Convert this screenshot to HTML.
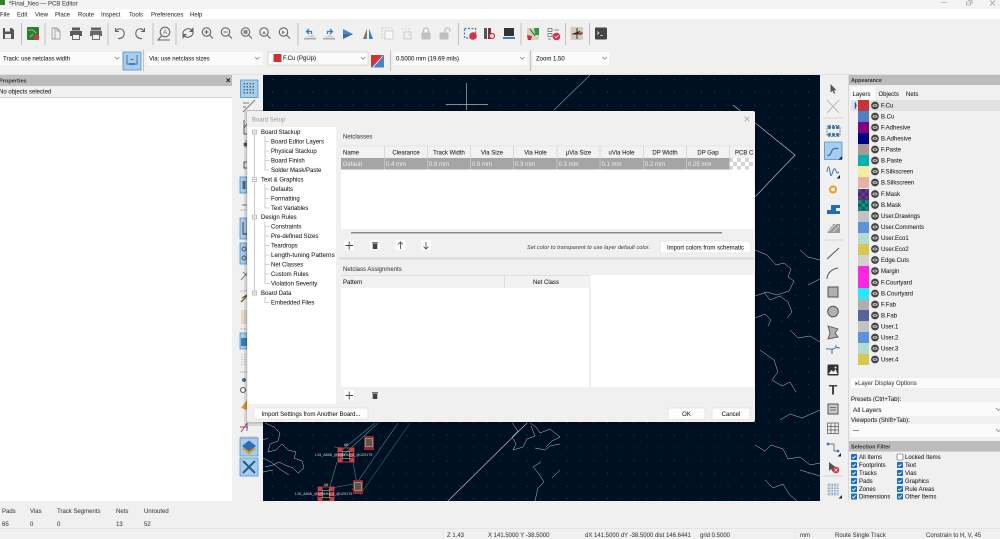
<!DOCTYPE html>
<html lang="en"><head><meta charset="utf-8"><title>Final_Neo — PCB Editor</title>
<style>
html,body{margin:0;padding:0;width:1000px;height:539px;overflow:hidden;background:#f0f0f0}
svg{display:block;filter:blur(.35px)}
text{font-family:"Liberation Sans",sans-serif;font-size:6px;fill:#1f1f1f;stroke:#1f1f1f;stroke-width:.07}
.m{fill:#444;stroke:#444}.h{fill:#3a3a3a;stroke:#3a3a3a}.g{fill:#999;stroke:none}.c{text-anchor:middle}.w{fill:#eee;stroke:none}
.i{fill:none;stroke:#666;stroke-width:1.1}.f{fill:#555}
.b{fill:#a8cdec;stroke:#4d94d0;stroke-width:.8}
.sep{stroke:#b5b5b5;stroke-width:.8}
.tl{stroke:#aaa;stroke-width:.6;fill:none}
.coast{fill:none;stroke:#c3c8cc;stroke-width:.5}
.cb{fill:#1c6fc4}.ck{fill:none;stroke:#fff;stroke-width:.8}
.eye{fill:#444}.eyei{fill:#ccc}
</style></head><body>
<svg width="1000" height="539" viewBox="0 0 1000 539" xmlns="http://www.w3.org/2000/svg">
<defs>
<pattern id="gd" width="13.4" height="12.7" patternUnits="userSpaceOnUse" x="4" y="3"><rect width=".9" height=".9" fill="#3c4855"/></pattern>
<pattern id="chk" width="8" height="8" patternUnits="userSpaceOnUse" x="729" y="158"><rect width="8" height="8" fill="#fff"/><rect width="4" height="4" fill="#d5d5d5"/><rect x="4" y="4" width="4" height="4" fill="#d5d5d5"/></pattern>
<pattern id="pm" width="7" height="7" patternUnits="userSpaceOnUse" x="858" y="189"><rect width="7" height="7" fill="#4a2a70"/><rect width="3.5" height="3.5" fill="#6a3a86"/><rect x="3.5" y="3.5" width="3.5" height="3.5" fill="#6a3a86"/></pattern>
<pattern id="bm" width="7" height="7" patternUnits="userSpaceOnUse" x="858" y="200"><rect width="7" height="7" fill="#00695c"/><rect width="3.5" height="3.5" fill="#1f8a7a"/><rect x="3.5" y="3.5" width="3.5" height="3.5" fill="#1f8a7a"/></pattern>
<g id="tr"><rect x="-2.300" y="-1.800" width="4.600" height="5.300" fill="#444"/><rect x="-3" y="-3.200" width="6" height="1" fill="#444"/></g>
<g id="ey"><circle r="3.9" class="eye"/><ellipse rx="2.5" ry="1.5" class="eyei"/><circle r=".9" fill="#444"/></g>
<g id="on"><rect x="-3" y="-3" width="6" height="6" rx=".8" class="cb"/><path d="M-1.800 0l1.200 1.300 2.300-2.500" class="ck"/></g>
<g id="fp"><rect x="-8" y="-7" width="16" height="14" fill="none" stroke="#b8323c" stroke-width="1"/><rect x="-8" y="-7" width="4.500" height="4" fill="#c8404a"/><rect x="3.500" y="-7" width="4.500" height="4" fill="#c8404a"/><rect x="-8" y="3" width="4.500" height="4" fill="#c8404a"/><rect x="3.500" y="3" width="4.500" height="4" fill="#c8404a"/><rect x="-8" y="-2" width="4.500" height="4" fill="#c8404a"/><rect x="3.500" y="-2" width="4.500" height="4" fill="#c8404a"/><rect x="-3.500" y="-3.500" width="7" height="7" fill="none" stroke="#d8d8a0" stroke-width=".5"/></g>
<g id="fs"><rect x="-5" y="-7" width="10" height="14" fill="#8c2a38"/><rect x="-3.500" y="-4.500" width="7" height="8" fill="#555" stroke="#cdd89a" stroke-width=".5"/></g>
</defs>

<!-- window chrome -->
<rect width="1000" height="539" fill="#f0f0f0"/>
<rect width="1000" height="9" fill="#f3f3f3"/>
<rect y="9" width="1000" height="10" fill="#fff"/>
<rect x="0" y="0" width="5" height="5" fill="#3d7a33"/>
<text x="9" y="5.500" class="m">*Final_Neo — PCB Editor</text>
<path d="M941 2.500h6M968 .5h4v3.500M966.500 2h4v3h-4zM990 .5l5 5M995 .5l-5 5" fill="none" stroke="#888" stroke-width=".6"/>
<text x="0" y="16.500" class="h">File</text><text x="17" y="16.500" class="h">Edit</text><text x="35" y="16.500" class="h">View</text><text x="55" y="16.500" class="h">Place</text><text x="78" y="16.500" class="h">Route</text><text x="101" y="16.500" class="h">Inspect</text><text x="129" y="16.500" class="h">Tools</text><text x="151" y="16.500" class="h">Preferences</text><text x="190" y="16.500" class="h">Help</text>

<!-- toolbar row 1 separators -->
<path class="sep" d="M21.500 23v22M45 23v22M108 23v22M153 23v22M176 23v22M298 23v22M458.500 23v22M521 23v22M565.500 23v22M589.500 23v22"/>
<!-- save -->
<path d="M3 28h9l2 2v9H3z" fill="#555"/><rect x="5" y="28" width="5" height="3.500" fill="#eee"/><rect x="5" y="34" width="6" height="4.500" fill="#eee"/>
<!-- board setup -->
<rect x="27" y="27" width="12" height="13" rx="1" fill="#2f7d32"/><path d="M28 30h5l3 3M30 37l3-3" stroke="#a6d88c" stroke-width=".8" fill="none"/><circle cx="36.500" cy="37" r="2.800" fill="#d43a3a"/>
<!-- page/print/plot -->
<path d="M52 28h5l3 3v8h-8zM55 28v11M57 28v3h3" fill="none" stroke="#888" stroke-width=".7"/>
<path d="M72 27.500h8v3h-8zM70 31h12v5h-12z" fill="#5a5a5a"/><rect x="72.500" y="34.500" width="7" height="5" fill="#f0f0f0" stroke="#5a5a5a" stroke-width=".9"/>
<path d="M91 27.500h10v3H91zM90 31h12v5H90z" fill="#666"/><rect x="92.500" y="34.500" width="7" height="5" fill="#f0f0f0" stroke="#666" stroke-width=".9"/>
<!-- undo redo -->
<path class="i" d="M115.500 28v3.500h3.500M116 31c2-3 7-3 8 1s-2 7-6 6.500"/>
<path class="i" d="M144.500 28v3.500H141M144 31c-2-3-7-3-8 1s2 7 6 6.500"/>
<!-- find -->
<circle cx="165" cy="32" r="4.800" class="i"/><path class="i" d="M161.500 36l-3.500 4h12"/><text x="165" y="34" class="c" style="font-size:6px;fill:#666;stroke:none">A</text>
<!-- refresh + zooms -->
<path class="i" d="M183 35c-1-5 5-8 9-5M193 31c1 5-5 8-9 5" stroke-width="1.200"/><path d="M193.500 27v5h-4.500zM182.500 39v-5h4.500z" fill="#666"/>
<g class="i"><circle cx="206.500" cy="32" r="4.200"/><path d="M209.500 35l3.500 3.500M204.500 32h4M206.500 30v4"/>
<circle cx="225.500" cy="32" r="4.200"/><path d="M228.500 35l3.500 3.500M223.500 32h4"/>
<circle cx="245.500" cy="32" r="4.200"/><path d="M248.500 35l3.500 3.500"/>
<circle cx="264" cy="32" r="4.200"/><path d="M267 35l3.500 3.500"/>
<circle cx="283.500" cy="32" r="4.200"/><path d="M286.500 35l3.500 3.500"/></g>
<rect x="243.500" y="30" width="4" height="4" fill="#888"/><path d="M262 34l2-3 2 3z" fill="#888"/><path d="M282 30l3 2.500-3 2z" fill="#888"/>
<!-- rotate -->
<path d="M304 38h12v1.500h-12z" fill="#aaa"/><path d="M305 37.500l8-3 3 3z" fill="#d2d2d2"/><path d="M309 29l-2.500 2.500 2.500 2.500M306.500 31.500h5v2.500" fill="none" stroke="#2f7fc1" stroke-width="1.300"/>
<path d="M323 38h12v1.500h-12z" fill="#aaa"/><path d="M323 37.500l8-3 3 3z" fill="#d2d2d2"/><path d="M330 29l2.500 2.500-2.500 2.500M332.500 31.500h-5v2.500" fill="none" stroke="#2f7fc1" stroke-width="1.300"/>
<!-- mirror -->
<path d="M343 29l10 5-10 5z" fill="#4a8cc8"/><path d="M343 39l10-5h-10z" fill="#3a6ea0"/>
<path d="M367 28.500v10.500h-4z" fill="#777"/><path d="M369 28.500v10.500h4z" fill="#3a80c4"/>
<!-- group / ungroup -->
<path d="M382 28h10v10h-10z" fill="none" stroke="#c8c8c8" stroke-dasharray="1.500 1.500"/><rect x="385" y="31" width="8" height="8" fill="#fafafa" stroke="#c8c8c8" stroke-width=".8"/>
<path d="M402 29h7v7" fill="none" stroke="#c8c8c8" stroke-dasharray="1.500 1.500"/><rect x="404" y="32" width="7" height="7" fill="none" stroke="#c8c8c8" stroke-width=".9"/>
<!-- locks -->
<rect x="421.500" y="32.500" width="9" height="7" rx="1" fill="#c0c0c0"/><path d="M423.500 32.500v-2c0-3.500 5-3.500 5 0v2" fill="none" stroke="#c0c0c0" stroke-width="1.300"/>
<rect x="439.500" y="32.500" width="9" height="7" rx="1" fill="#c0c0c0"/><path d="M445 32.500v-2c0-3.500 5-3.500 5 0v1" fill="none" stroke="#c0c0c0" stroke-width="1.300"/>
<!-- drc group -->
<rect x="464.500" y="28.500" width="11" height="9.500" fill="none" stroke="#3a80c4" stroke-dasharray="2 1.500" stroke-width="1.300"/><circle cx="473" cy="36" r="3.800" fill="#d8304a"/>
<rect x="484" y="28" width="3" height="11" fill="#555"/><rect x="488" y="28" width="3" height="11" fill="#8a3040"/><circle cx="492" cy="36" r="2.500" fill="#eee" stroke="#d8304a" stroke-width="1.200"/>
<rect x="504" y="28" width="10" height="8" fill="#333"/><rect x="503" y="37" width="12" height="2" fill="#3a80c4"/>
<rect x="527" y="28" width="12" height="12" rx="1" fill="#d6d2b8"/><path d="M534 28h5v7h-4z" fill="#2f9a3a"/><path d="M527 35l5 1-1 4h-3z" fill="#c8304a"/><path d="M530 29l5 7" stroke="#333" stroke-width=".8"/>
<path d="M548 28.500h4v3h-4zM548 33.500h4v3h-4z" fill="none" stroke="#666" stroke-width=".7"/><path d="M554 30h5M548 39h3" stroke="#666" stroke-width=".8"/><circle cx="556.500" cy="36.500" r="3.800" fill="#d8304a"/><path d="M554.800 36.500l1.300 1.300 2.300-2.500" fill="none" stroke="#fff" stroke-width=".8"/>
<rect x="570.500" y="27" width="12.500" height="13" rx="1.500" fill="#d6ccb4"/><path d="M577 28v11M572 34h5l3-3M577 34h5" stroke="#333" stroke-width="1"/><path d="M578 33h5" stroke="#c8304a" stroke-width="1.200"/>
<rect x="595" y="27.500" width="12" height="12" rx="1" fill="#444"/><path d="M597 31.500l2 1.500-2 1.500M600 35.500h3" stroke="#ddd" stroke-width=".8" fill="none"/>

<!-- toolbar row 2 -->
<rect x="0" y="52" width="122" height="13" fill="#fbfbfb"/>
<text x="3" y="60.500">Track: use netclass width</text><path d="M115 57l2.200 2.200 2.200-2.200" fill="none" stroke="#777" stroke-width=".7"/>
<rect x="123" y="52" width="18" height="18" class="b"/><path d="M127 55v9h10v-9M130.500 59.500h3" fill="none" stroke="#3f6f9c" stroke-width=".9"/>
<rect x="129" y="63" width="6" height="2" fill="#3a80c4"/>
<path class="sep" d="M143.500 50v21M390.500 50v21M530.500 50v21"/>
<rect x="147" y="52" width="116" height="13" fill="#fbfbfb"/>
<text x="149" y="60.500">Via: use netclass sizes</text><path d="M255 57l2.200 2.200 2.200-2.200" fill="none" stroke="#777" stroke-width=".7"/>
<rect x="268" y="52" width="100" height="13" fill="#fbfbfb" stroke="#bbb" stroke-width=".5"/><rect x="273.500" y="54" width="8" height="8" fill="#c83434"/>
<text x="283" y="60">F.Cu (PgUp)</text><path d="M361 57l2.200 2.200 2.200-2.200" fill="none" stroke="#777" stroke-width=".7"/>
<path d="M371 55h13L371 67.500z" fill="#d03434"/><path d="M384 55v12.500h-13z" fill="#4d7fc4"/><path d="M383 55.500l-10 12" stroke="#fff" stroke-width=".6"/>
<rect x="393.500" y="52" width="134" height="13" fill="#fbfbfb"/>
<text x="396" y="60.500">0.5000 mm (19.69 mils)</text><path d="M520 57l2.200 2.200 2.200-2.200" fill="none" stroke="#777" stroke-width=".7"/>
<rect x="533" y="52" width="76" height="13" fill="#fbfbfb"/>
<text x="536" y="60.500">Zoom 1.50</text><path d="M602.500 57l2.200 2.200 2.200-2.200" fill="none" stroke="#777" stroke-width=".7"/>
<rect y="74" width="1000" height=".7" fill="#ddd"/>

<!-- properties -->
<rect y="75" width="232" height="11" fill="#bdbdbd"/>
<text x="-1" y="82.500" style="font-weight:bold;font-size:5.600px;fill:#333;stroke:none">Properties</text>
<path d="M226.500 78.500l3.500 3.500M230 78.500l-3.500 3.500" stroke="#222" stroke-width="1"/>
<text x="-1" y="93.500">No objects selected</text>
<rect y="97" width="232" height="1" fill="#d6d6d6"/>
<rect y="98" width="232" height="403" fill="#fff"/>

<!-- canvas -->
<rect x="263" y="75" width="557" height="426" fill="#001023"/>
<rect x="263" y="75" width="557" height="426" fill="url(#gd)"/>
<path d="M466.500 83v27M446 104.500h42" stroke="#aeb4ba" stroke-width=".7"/>
<path d="M590 75l-36 35" stroke="#8f959c" stroke-width=".6"/>
<path d="M733 105l62 50-40 42" stroke="#c5cace" stroke-width=".6" fill="none"/>
<path d="M448 501l79-78" stroke="#d0d4d8" stroke-width=".6"/>
<path class="coast" d="M755 250l12 5 9 10 8-2 7 6-3 8 6 4-5 10-12 4-10-3-12 4M764 292l6 8 10-4 8 6 4 10-5 6M755 318l10-4 6 6-3 6M800 250l8 7 12 3M808 285l12-6M790 330l8 8 12-2 10 6M760 350l14 10 4 12-6 8 10 6 8-4 6 10M780 420l10-6 12 4 18-8M755 445l10 6 6-6 12 4 5 10 12-2 10 8 10-2M765 480l8 8 10-4 6 10 8 7M800 470l20 6"/>
<path class="coast" d="M265 423l9 4 6 6-2 8-8 3-2 8 8-2 6-6 6 6 8 2-2 6 8 3 2 7-6 5-5-5-8-3-6-3-6 3-8 2M263 458l8 4 10 8 8 5M263 472l10-2M263 440l5-2"/>
<path class="coast" d="M512 423l6 8-6 6 4 7-3 6 10-3 4-8 8-3-4-10M530 423l6 4 4 6 10-4 10 8-8 4-6 6M535 448l10 2 5-4 10-2M541 462l-8 5 6 7 5 8-6 6-3 13M560 470l-8 8"/>
<path d="M338 460l40-37M342 450l33-27M352 456l5 28M337 462l-8 28M331 488l23-4M352 490l46-67M322 500l-4 1M345 448l-11-1" stroke="#4a8a90" stroke-width=".6" fill="none"/>
<path d="M360 495l50-72" stroke="#2f6a70" stroke-width=".6" fill="none"/>
<use href="#fp" x="346" y="455"/><use href="#fs" x="369" y="443"/><use href="#fp" x="326" y="494"/><use href="#fs" x="358" y="487"/>
<text x="346" y="446" class="c" style="font-size:3.600px;fill:#e8e8b0;stroke:none">U6</text>
<text x="326" y="486" class="c" style="font-size:3.600px;fill:#e8e8b0;stroke:none">U6</text>
<text x="315" y="456" style="font-size:3.700px;fill:#d5d5d5;stroke:none">L15_A806_@100kHz_1_@129179</text>
<text x="295" y="495" style="font-size:3.700px;fill:#d5d5d5;stroke:none">L15_A806_@100kHz_1_@129179</text>

<!-- left toolbar -->
<rect x="232" y="75" width="31" height="426" fill="#f0f0f0"/>
<rect x="240.500" y="80" width="17.500" height="17.500" class="b"/>
<g fill="#4a6c8c"><path d="M243.500 83h1.500v1.500h-1.500zM246.500 83h1.500v1.500h-1.500zM249.500 83h1.500v1.500h-1.500zM252.500 83h1.500v1.500h-1.500zM243.500 86h1.500v1.500h-1.500zM246.500 86h1.500v1.500h-1.500zM249.500 86h1.500v1.500h-1.500zM252.500 86h1.500v1.500h-1.500zM243.500 89h1.500v1.500h-1.500zM246.500 89h1.500v1.500h-1.500zM249.500 89h1.500v1.500h-1.500zM252.500 89h1.500v1.500h-1.500zM243.500 92h1.500v1.500h-1.500zM246.500 92h1.500v1.500h-1.500zM249.500 92h1.500v1.500h-1.500zM252.500 92h1.500v1.500h-1.500z"/></g>
<path d="M243 112l12-12M243 103h6M243 107h3" stroke="#777" stroke-width=".9" fill="none"/>
<path d="M244 120v14h4M244 128l3-4" stroke="#555" stroke-width=".9" fill="none"/>
<path d="M246 140v8M244 143h4v3h-4z" fill="#555" stroke="#555" stroke-width=".6"/>
<path d="M244 162h4v6h-4z" fill="none" stroke="#555"/>
<rect x="240" y="177" width="7" height="16" class="b"/><rect x="242.500" y="181" width="3" height="8" fill="#47698a"/>
<path d="M242 205h6" stroke="#777"/>
<path class="sep" d="M240 210h7M240 262h7M240 291h7M240 329h7M240 372h7M240 437h18"/>
<rect x="240" y="218" width="7" height="21" class="b"/><path d="M243 222v12h4" stroke="#333" stroke-width=".9" fill="none"/>
<rect x="240" y="243" width="7" height="21" class="b"/><circle cx="244" cy="249" r="2" fill="none" stroke="#555"/><circle cx="244" cy="258" r="2" fill="none" stroke="#555"/>
<path d="M241 280l6-7M243 272l4 4" stroke="#888" fill="none"/>
<path d="M241 302l6-6M242 298l5-3" stroke="#7a5a22" stroke-width="1.300" fill="none"/>
<rect x="241" y="310" width="6" height="14" fill="#e9d6c4"/>
<rect x="240" y="333" width="7" height="16" class="b"/><rect x="241" y="338" width="6" height="8" fill="#3a7dbb"/>
<path d="M242 354v12M245 354v12" stroke="#aaa" stroke-dasharray="1 1.500"/>
<circle cx="244" cy="380" r="2" fill="#3a70a8"/><circle cx="243" cy="390" r="2.500" fill="none" stroke="#555"/>
<path d="M241 408l6-8v10z" fill="#e09a2a"/>
<path d="M240 427h8M247 423l-6 9" stroke="#c04050" stroke-width="1" fill="none"/><path d="M247 423v8" stroke="#3a70a8" stroke-width="1"/>
<rect x="240" y="438" width="18" height="18" class="b"/><path d="M249 443l7 6-7 5.500-7-5.500z" fill="#e09a2a"/><path d="M249 440.500l7 5.500-7 5.500-7-5.500z" fill="#2e6db0"/>
<rect x="240" y="458" width="18" height="18" class="b"/><path d="M243 461l12 12M255 461l-12 12" stroke="#245f8e" stroke-width="2"/><path d="M243 461l3 1-2 2z" fill="#555"/>

<!-- right toolbar -->
<rect x="820" y="75" width="28" height="426" fill="#f0f0f0"/>
<path d="M830.500 84l0 8.500 2-1.700 1.500 3 1.200-.6-1.400-2.900 2.700-.1z" fill="#555"/>
<path d="M827 100l12 13M839 100l-12 13" stroke="#aaa" stroke-width=".8"/>
<path d="M823 118h20M823 240h20M823 476h20" stroke="#ccc" stroke-width=".8"/>
<rect x="827" y="125.500" width="13" height="11" rx="2" fill="none" stroke="#555" stroke-width=".8" stroke-dasharray="2 1"/>
<g fill="#2f78bc"><circle cx="829.500" cy="127.500" r="1.600"/><circle cx="833.500" cy="127.500" r="1.600"/><circle cx="837.500" cy="127.500" r="1.600"/><circle cx="829.500" cy="134.500" r="1.600"/><circle cx="833.500" cy="134.500" r="1.600"/><circle cx="837.500" cy="134.500" r="1.600"/></g>
<rect x="824.500" y="142" width="17.500" height="17.500" class="b"/><path d="M827.500 155.500c3 0 3-2 4-4s2-3 3-3h4" fill="none" stroke="#2f6fb0" stroke-width="1.200"/><path d="M842 156v3.500h-3.500z" fill="#222"/>
<path d="M827 172c1-7 2-7 3 0s2 2 3-1 2-3 3 0 2 2 3 1" fill="none" stroke="#2f78bc" stroke-width="1"/><path d="M840 175v3.500h-3.500z" fill="#222"/>
<circle cx="833" cy="189.500" r="3" fill="none" stroke="#ee9b1f" stroke-width="2"/>
<path d="M827 214v-4h4v-5h9v3h-4v3h4v3z" fill="#1e6fb8"/>
<path d="M827 233l6-9h7v9z" fill="#999"/><path d="M829 231l7-7M833 232l6-6M829 228l4-3" stroke="#eee" stroke-width=".6"/>
<path d="M827 259l12-11" stroke="#555"/>
<path d="M827 279c0-6 5-10 11-11" fill="none" stroke="#555"/>
<rect x="828" y="287" width="10" height="10" fill="#b0b0b0" stroke="#555"/>
<circle cx="833" cy="311.500" r="5.300" fill="#b0b0b0" stroke="#555"/>
<path d="M828 326l10 3-3 4 3 4-10 2 2-6z" fill="#b0b0b0" stroke="#555" stroke-width=".9"/>
<path d="M826 349c3-1 5 1 7 0s3-2 7-1M832 349v5M836 345l0 3" fill="none" stroke="#2f78bc"/>
<rect x="827.500" y="364.500" width="11" height="11" rx="1" fill="#333"/><path d="M828.500 374l3-4 2 2 2-3 2 5z" fill="#f0f0f0"/><circle cx="835.500" cy="367.500" r="1" fill="#f0f0f0"/>
<text x="833" y="394.500" class="c" style="font-size:14px;font-weight:bold;fill:#444;stroke:none">T</text>
<rect x="828" y="404" width="10" height="10" fill="#c8c8c8" stroke="#555"/><path d="M830 407.500h6M830 410h6" stroke="#555" stroke-width=".7"/>
<path d="M827.500 423h11v10.500h-11zM827.500 426.500h11M827.500 430h11M831 423v10.500M835 423v10.500" fill="none" stroke="#555" stroke-width=".7"/>
<path d="M828 444h6v7h5" fill="none" stroke="#555" stroke-width=".8"/><circle cx="828" cy="444" r="1.400" fill="#2f78bc"/><circle cx="838" cy="451" r="1.400" fill="#2f78bc"/><path d="M841 453v3.500h-3.500z" fill="#222"/>
<path d="M829 462l0 9 2-2 2 3 2-1-2-3 3-.5z" fill="#555"/><circle cx="836" cy="470" r="3.300" fill="#d8304a"/><path d="M834.500 468.500l3 3M837.500 468.500l-3 3" stroke="#fff" stroke-width=".7"/>
<path d="M827.500 485h11M827.500 488h11M827.500 491h11M827.500 494h11M829 483.500v12M832 483.500v12M835 483.500v12M838 483.500v12" stroke="#3a70a8" stroke-width=".7" stroke-dasharray="1.200 1"/><path d="M842 495v3.500h-3.500z" fill="#222"/>

<!-- appearance -->
<rect x="848" y="75" width="1" height="426" fill="#d8d8d8"/>
<rect x="849" y="75" width="151" height="10" fill="#bcbcbc"/>
<text x="851" y="82" style="font-weight:bold;font-size:5.400px;fill:#333;stroke:none">Appearance</text>
<rect x="851" y="87" width="24" height="13" fill="#fbfbfb"/>
<text x="852.500" y="96">Layers</text><text x="878.500" y="96">Objects</text><text x="906" y="96">Nets</text>
<rect x="851" y="100" width="149" height="11" fill="#e2e2e2"/>
<path d="M855 102v7l1.500-3.500z" fill="#3c3cc8" stroke="#3c3cc8" stroke-width=".5"/>
<rect x="858" y="100" width="11" height="11" fill="#c83434"/><rect x="858" y="111" width="11" height="11" fill="#4d7fc4"/><rect x="858" y="122" width="11" height="11" fill="#840084"/><rect x="858" y="133" width="11" height="11" fill="#000084"/><rect x="858" y="144" width="11" height="11" fill="#a79a94"/><rect x="858" y="155" width="11" height="11" fill="#00b2b2"/><rect x="858" y="166" width="11" height="11" fill="#f2eda1"/><rect x="858" y="177" width="11" height="11" fill="#e8b2a7"/><rect x="858" y="189" width="11" height="11" fill="url(#pm)"/><rect x="858" y="200" width="11" height="11" fill="url(#bm)"/><rect x="858" y="211" width="11" height="11" fill="#c2c2c2"/><rect x="858" y="222" width="11" height="11" fill="#5994dc"/><rect x="858" y="233" width="11" height="11" fill="#b4dbd2"/><rect x="858" y="244" width="11" height="11" fill="#d8c852"/><rect x="858" y="255" width="11" height="11" fill="#d0d2cd"/><rect x="858" y="266" width="11" height="11" fill="#ff26e2"/><rect x="858" y="277" width="11" height="11" fill="#ff26e2"/><rect x="858" y="288" width="11" height="11" fill="#26e9ff"/><rect x="858" y="299" width="11" height="11" fill="#afafaf"/><rect x="858" y="310" width="11" height="11" fill="#58659b"/><rect x="858" y="321" width="11" height="11" fill="#c2c2c2"/><rect x="858" y="332" width="11" height="11" fill="#5994dc"/><rect x="858" y="343" width="11" height="11" fill="#b4dbd2"/><rect x="858" y="354" width="11" height="11" fill="#d8c852"/>
<use href="#ey" x="875" y="105.500"/><use href="#ey" x="875" y="116.500"/><use href="#ey" x="875" y="127.500"/><use href="#ey" x="875" y="138.500"/><use href="#ey" x="875" y="149.500"/><use href="#ey" x="875" y="160.500"/><use href="#ey" x="875" y="171.500"/><use href="#ey" x="875" y="182.500"/><use href="#ey" x="875" y="194"/><use href="#ey" x="875" y="205"/><use href="#ey" x="875" y="216"/><use href="#ey" x="875" y="227"/><use href="#ey" x="875" y="238"/><use href="#ey" x="875" y="249"/><use href="#ey" x="875" y="260"/><use href="#ey" x="875" y="271"/><use href="#ey" x="875" y="282.500"/><use href="#ey" x="875" y="293.500"/><use href="#ey" x="875" y="304.500"/><use href="#ey" x="875" y="315.500"/><use href="#ey" x="875" y="326.500"/><use href="#ey" x="875" y="337.500"/><use href="#ey" x="875" y="348.500"/><use href="#ey" x="875" y="359.500"/>
<text x="881" y="107.500">F.Cu</text><text x="881" y="118.500">B.Cu</text><text x="881" y="129.500">F.Adhesive</text><text x="881" y="140.500">B.Adhesive</text><text x="881" y="151.500">F.Paste</text><text x="881" y="162.500">B.Paste</text><text x="881" y="173.500">F.Silkscreen</text><text x="881" y="184.500">B.Silkscreen</text><text x="881" y="196">F.Mask</text><text x="881" y="207">B.Mask</text><text x="881" y="218">User.Drawings</text><text x="881" y="229">User.Comments</text><text x="881" y="240">User.Eco1</text><text x="881" y="251">User.Eco2</text><text x="881" y="262">Edge.Cuts</text><text x="881" y="273">Margin</text><text x="881" y="284.500">F.Courtyard</text><text x="881" y="295.500">B.Courtyard</text><text x="881" y="306.500">F.Fab</text><text x="881" y="317.500">B.Fab</text><text x="881" y="328.500">User.1</text><text x="881" y="339.500">User.2</text><text x="881" y="350.500">User.3</text><text x="881" y="361.500">User.4</text>
<rect x="851" y="378" width="149" height="10" fill="#fbfbfb"/>
<path d="M855.500 381.500v4l2-2z" fill="#444"/><text x="858" y="385" class="m">Layer Display Options</text>
<text x="851" y="401">Presets (Ctrl+Tab):</text>
<rect x="851" y="402" width="149" height="14" fill="#fbfbfb"/><text x="853" y="412" style="font-size:6.500px">All Layers</text><path d="M996 408l2.500 2.500 2.500-2.500" fill="none" stroke="#777" stroke-width=".7"/>
<text x="851" y="422">Viewports (Shift+Tab):</text>
<rect x="851" y="424" width="149" height="13" fill="#fbfbfb"/><text x="853" y="432">---</text><path d="M996 429l2.500 2.500 2.500-2.500" fill="none" stroke="#777" stroke-width=".7"/>
<rect x="849" y="441" width="151" height="10.500" fill="#bcbcbc"/>
<text x="851" y="448.500" style="font-weight:bold;font-size:5.500px;fill:#333;stroke:none">Selection Filter</text>
<use href="#on" x="854" y="457"/><use href="#on" x="854" y="465"/><use href="#on" x="854" y="473"/><use href="#on" x="854" y="481"/><use href="#on" x="854" y="489"/><use href="#on" x="854" y="496.500"/>
<rect x="897" y="454" width="6" height="6" rx=".8" fill="#fff" stroke="#555" stroke-width=".6"/>
<use href="#on" x="900" y="465"/><use href="#on" x="900" y="473"/><use href="#on" x="900" y="481"/><use href="#on" x="900" y="489"/><use href="#on" x="900" y="496.500"/>
<text x="859" y="459">All Items</text><text x="859" y="467">Footprints</text><text x="859" y="475">Tracks</text><text x="859" y="483">Pads</text><text x="859" y="491">Zones</text><text x="859" y="498.500">Dimensions</text>
<text x="905" y="459">Locked Items</text><text x="905" y="467">Text</text><text x="905" y="475">Vias</text><text x="905" y="483">Graphics</text><text x="905" y="491">Rule Areas</text><text x="905" y="498.500">Other Items</text>

<!-- bottom -->
<rect y="501" width="1000" height="38" fill="#f0f0f0"/>
<text x="2" y="513" class="m">Pads</text><text x="30" y="513" class="m">Vias</text><text x="57" y="513" class="m">Track Segments</text><text x="116" y="513" class="m">Nets</text><text x="144" y="513" class="m">Unrouted</text>
<text x="2" y="526" class="m">65</text><text x="30" y="526" class="m">0</text><text x="57" y="526" class="m">0</text><text x="116" y="526" class="m">13</text><text x="144" y="526" class="m">52</text>
<rect y="528" width="1000" height=".6" fill="#ddd"/>
<path d="M923.500 529v10M795 529v10M443 529v10" stroke="#e0e0e0" stroke-width=".5"/>
<text x="447" y="537" class="m">Z 1.43</text><text x="488" y="537" class="m">X 141.5000  Y -38.5000</text><text x="585" y="537" class="m">dX 141.5000  dY -38.5000  dist 146.6441</text><text x="700" y="537" class="m">grid 0.5000</text><text x="800" y="537" class="m">mm</text><text x="835" y="537" class="m">Route Single Track</text><text x="926" y="537" class="m">Constrain to H, V, 45</text>

<!-- dialog shadow + body -->
<rect x="244" y="110" width="514" height="316" rx="3" fill="#000" opacity=".1"/>
<rect x="246" y="110" width="510" height="313.500" rx="3" fill="#000" opacity=".12"/>
<rect x="247" y="111" width="508" height="311" rx="2" fill="#f0f0f0"/>
<text x="252" y="121.500" class="g">Board Setup</text>
<path d="M744.500 116.500l5 5M749.500 116.500l-5 5" stroke="#aaa" stroke-width=".8"/>

<!-- tree -->
<rect x="248" y="127" width="88" height="277" fill="#fff"/>
<path class="tl" d="M254.500 132v161M265 136v34.500M265 184v24.500M265 222v61.500M265 297v5.500M265 141.500h5M265 151h5M265 160.500h5M265 170h5M265 189h5M265 198.500h5M265 208h5M265 226.500h5M265 236h5M265 245.500h5M265 255h5M265 264.500h5M265 274h5M265 283.500h5M265 302.500h5"/>
<g fill="#fff" stroke="#999" stroke-width=".6"><rect x="252.500" y="130" width="4" height="4"/><rect x="252.500" y="177.500" width="4" height="4"/><rect x="252.500" y="215" width="4" height="4"/><rect x="252.500" y="291" width="4" height="4"/></g>
<path d="M253.300 132h2.400M253.300 179.500h2.400M253.300 217h2.400M253.300 293h2.400" stroke="#666" stroke-width=".5"/>
<text x="261" y="134">Board Stackup</text><text x="271" y="143.500">Board Editor Layers</text><text x="271" y="153">Physical Stackup</text><text x="271" y="162.500">Board Finish</text><text x="271" y="172">Solder Mask/Paste</text>
<text x="261" y="181.500">Text &amp; Graphics</text><text x="271" y="191">Defaults</text><text x="271" y="200.500">Formatting</text><text x="271" y="210">Text Variables</text>
<text x="261" y="219">Design Rules</text><text x="271" y="228.500">Constraints</text><text x="271" y="238">Pre-defined Sizes</text><text x="271" y="247.500">Teardrops</text><text x="271" y="257" style="font-size:6.300px">Length-tuning Patterns</text><text x="271" y="266.500">Net Classes</text><text x="271" y="276">Custom Rules</text><text x="271" y="285.500">Violation Severity</text>
<text x="261" y="295">Board Data</text><text x="271" y="304.500">Embedded Files</text>

<!-- netclasses -->
<text x="343" y="138.500" class="m">Netclasses</text>
<rect x="341" y="146" width="413" height="12" fill="#f2f2f2"/>
<path d="M341 146h413" stroke="#ddd" stroke-width=".5"/>
<path d="M384.500 146v23.500M427.500 146v23.500M470.500 146v23.500M513.500 146v23.500M557 146v23.500M600 146v23.500M643.500 146v23.500M686.500 146v23.500M729.500 146v23.500" stroke="#c8c8c8" stroke-width=".6"/>
<text x="343" y="154.500">Name</text>
<text x="406" y="154.500" class="c">Clearance</text><text x="449" y="154.500" class="c">Track Width</text><text x="492" y="154.500" class="c">Via Size</text><text x="535.500" y="154.500" class="c">Via Hole</text><text x="578.500" y="154.500" class="c">μVia Size</text><text x="621.500" y="154.500" class="c">uVia Hole</text><text x="665" y="154.500" class="c">DP Width</text><text x="708" y="154.500" class="c">DP Gap</text><text x="735" y="154.500">PCB C</text>
<rect x="341" y="158" width="413" height="71" fill="#fff"/>
<rect x="341" y="158" width="388.500" height="11.500" fill="#a5a5a5"/>
<rect x="729.500" y="158" width="23.500" height="11.500" fill="url(#chk)"/>
<path d="M384.500 158v11.500M427.500 158v11.500M470.500 158v11.500M513.500 158v11.500M557 158v11.500M600 158v11.500M643.500 158v11.500M686.500 158v11.500" stroke="#d5d5d5" stroke-width=".6"/>
<text x="343" y="166" class="w">Default</text><text x="386" y="166" class="w">0.4 mm</text><text x="429" y="166" class="w">0.8 mm</text><text x="472" y="166" class="w">0.6 mm</text><text x="515" y="166" class="w">0.3 mm</text><text x="558.500" y="166" class="w">0.3 mm</text><text x="601.500" y="166" class="w">0.1 mm</text><text x="645" y="166" class="w">0.2 mm</text><text x="688" y="166" class="w">0.25 mm</text>
<rect x="351" y="232" width="371" height="1.500" fill="#8a8a8a"/>
<g fill="#fff"><rect x="344" y="240" width="10" height="10" rx="1.500"/><rect x="370" y="240" width="10" height="10" rx="1.500"/><rect x="395.500" y="240" width="10" height="10" rx="1.500"/><rect x="421" y="240" width="10" height="10" rx="1.500"/></g>
<path d="M345.500 245.500h7.500M349.200 241.500v8" stroke="#444" stroke-width=".9"/>
<use href="#tr" x="375" y="245.500"/>
<path d="M400.500 249v-7M398 244.500l2.500-2.500 2.500 2.500M426 242v7M423.500 246.500l2.500 2.500 2.500-2.500" fill="none" stroke="#444" stroke-width=".8"/>
<text x="527" y="249" style="font-style:italic;font-size:5.400px;fill:#333;stroke:none" textLength="123">Set color to transparent to use layer default color.</text>
<rect x="660" y="241" width="91" height="12" rx="1.500" fill="#fdfdfd" stroke="#d5d5d5" stroke-width=".5"/>
<text x="705.500" y="249.500" class="c">Import colors from schematic</text>
<rect x="339" y="257.500" width="415" height="1.800" fill="#d8d8d8"/>

<!-- assignments -->
<text x="343" y="271" class="m">Netclass Assignments</text>
<rect x="341" y="275.500" width="248" height="12.500" fill="#f2f2f2"/>
<path d="M341 275.500h248M504.500 275.500v12.500" stroke="#ccc" stroke-width=".5"/>
<text x="343" y="284">Pattern</text><text x="546" y="284" class="c">Net Class</text>
<rect x="341" y="288" width="248" height="99" fill="#fff"/>
<rect x="591" y="275" width="163" height="112" fill="#fff"/>
<g fill="#fff"><rect x="344" y="390" width="10" height="10" rx="1.500"/></g>
<path d="M345.500 395.500h7.500M349.200 391.500v8" stroke="#444" stroke-width=".9"/>
<use href="#tr" x="375" y="395.500"/>

<!-- dialog buttons -->
<rect x="254" y="408" width="114" height="11" rx="1.500" fill="#fdfdfd" stroke="#d5d5d5" stroke-width=".5"/>
<text x="311" y="416" class="c">Import Settings from Another Board...</text>
<rect x="668" y="408" width="37" height="11.500" rx="1.500" fill="#fdfdfd" stroke="#d5d5d5" stroke-width=".5"/>
<text x="686.500" y="416" class="c">OK</text>
<rect x="712" y="408" width="38" height="11.500" rx="1.500" fill="#fdfdfd" stroke="#d5d5d5" stroke-width=".5"/>
<text x="731" y="416" class="c">Cancel</text>
</svg>
</body></html>
